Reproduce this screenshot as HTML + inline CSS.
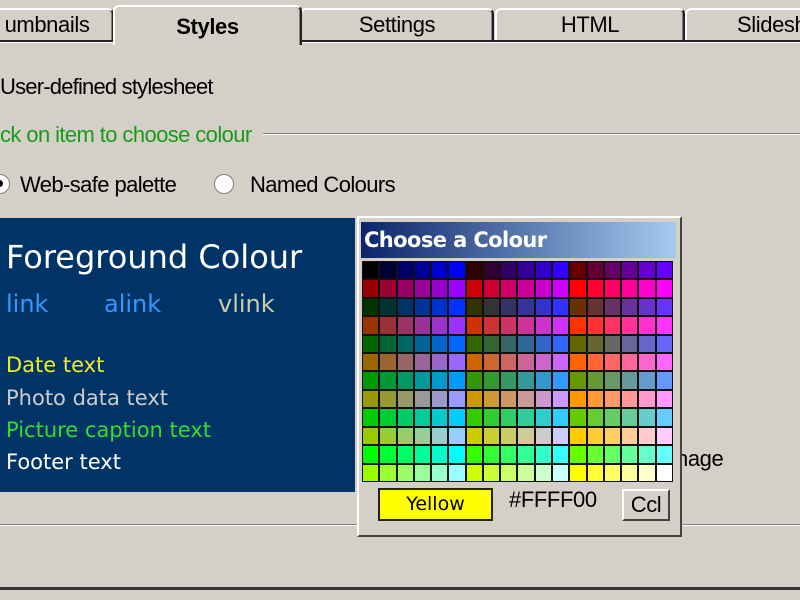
<!DOCTYPE html>
<html><head><style>
body{margin:0;width:800px;height:600px;background:#d4d0c8;position:relative;overflow:hidden;font-family:"Liberation Sans",sans-serif;}
.a{position:absolute;letter-spacing:-0.4px;}
.tab{position:absolute;top:8px;height:30px;border:2px solid #fff;border-right-color:#222;border-bottom:none;border-radius:6px 6px 0 0;background:#d4d0c8;font-size:22px;text-align:center;line-height:30px;box-shadow:inset -1px 0 0 #808080,0 2px 0 #222;letter-spacing:-0.4px;}
.t{position:absolute;font-family:"DejaVu Sans",sans-serif;}
#grid{position:absolute;left:362px;top:261px;width:311px;height:221px;background:#111;display:grid;grid-template-columns:repeat(18,1fr);grid-template-rows:repeat(12,1fr);gap:2px;padding:1px;box-sizing:border-box;}
</style></head><body>
<div class="tab" style="left:-20px;width:130px;">umbnails</div>
<div class="tab" style="left:300px;width:190px;">Settings</div>
<div class="tab" style="left:495px;width:186px;">HTML</div>
<div class="tab" style="left:685px;width:140px;text-align:left;padding-left:50px;">Slideshow</div>
<div class="a" style="left:0;top:40px;width:800px;height:2px;background:#222;"></div>
<div class="a" style="left:0;top:42px;width:800px;height:1px;background:#fff;"></div>
<div class="tab" style="left:113px;top:5px;width:185px;height:38px;font-weight:bold;line-height:40px;box-shadow:inset -1px 0 0 #808080;">Styles</div>
<div class="a" style="left:0;top:74px;font-size:22px;letter-spacing:-0.8px;">User-defined stylesheet</div>
<div class="a" style="left:0;top:122px;font-size:22px;color:#1a9a1a;letter-spacing:-0.6px;">ck on item to choose colour</div>
<div class="a" style="left:263px;top:133px;width:537px;height:1px;background:#808080;border-bottom:1px solid #fff;"></div>
<div class="a" style="left:-10px;top:174px;width:18px;height:18px;border-radius:50%;background:#fff;border:1px solid #808080;"></div>
<div class="a" style="left:-4px;top:180px;width:7px;height:7px;border-radius:50%;background:#000;"></div>
<div class="a" style="left:20px;top:172px;font-size:22px;letter-spacing:-0.6px;">Web-safe palette</div>
<div class="a" style="left:214px;top:174px;width:20px;height:20px;border-radius:50%;background:#fff;border:1px solid #808080;box-sizing:border-box;"></div>
<div class="a" style="left:250px;top:172px;font-size:22px;letter-spacing:-0.6px;">Named Colours</div>
<div class="a" style="left:0;top:218px;width:355px;height:274px;background:#003366;"></div>
<div class="t" style="left:6px;top:238px;font-size:32px;color:#fff;">Foreground Colour</div>
<div class="t" style="left:6px;top:290px;font-size:24px;color:#3399ff;">link</div>
<div class="t" style="left:104px;top:290px;font-size:24px;color:#3399ff;">alink</div>
<div class="t" style="left:218px;top:290px;font-size:24px;color:#ccccaa;">vlink</div>
<div class="t" style="left:6px;top:353px;font-size:21px;color:#eeee22;">Date text</div>
<div class="t" style="left:6px;top:386px;font-size:21px;color:#cccccc;">Photo data text</div>
<div class="t" style="left:6px;top:418px;font-size:21px;color:#33dd33;">Picture caption text</div>
<div class="t" style="left:6px;top:450px;font-size:21px;color:#fff;">Footer text</div>
<div class="a" style="left:676px;top:446px;font-size:22px;">nage</div>
<div class="a" style="left:0;top:524px;width:800px;height:1px;background:#808080;border-bottom:1px solid #fff;"></div>
<div class="a" style="left:0;top:587px;width:800px;height:3px;background:#333;"></div>
<div class="a" style="left:357px;top:216px;width:325px;height:321px;background:#d4d0c8;border:2px solid #fff;border-right-color:#444;border-bottom-color:#444;box-sizing:border-box;"></div>
<div class="a" style="left:361px;top:222px;width:315px;height:36px;background:linear-gradient(90deg,#0a246a,#a6caf0);color:#fff;font-weight:bold;font-size:21px;line-height:36px;padding-left:3px;box-sizing:border-box;font-family:'DejaVu Sans',sans-serif;letter-spacing:-0.6px;">Choose a Colour</div>
<div id="grid"></div>
<div class="a" style="left:378px;top:488px;width:115px;height:33px;background:#ffff00;border:2px solid #222;box-sizing:border-box;text-align:center;line-height:29px;font-size:19px;font-family:'DejaVu Sans',sans-serif;letter-spacing:0;">Yellow</div>
<div class="a" style="left:509px;top:487px;font-size:22px;">#FFFF00</div>
<div class="a" style="left:622px;top:489px;width:48px;height:32px;border:2px solid #fff;border-right-color:#444;border-bottom-color:#444;box-sizing:border-box;text-align:center;line-height:28px;font-size:22px;">Ccl</div>
<script>
var g=document.getElementById('grid'),h=['00','33','66','99','cc','ff'];
for(var r=0;r<12;r++)for(var c=0;c<18;c++){var gg=h[r>>1],rr=h[(r&1)*3+Math.floor(c/6)],bb=h[c%6];var d=document.createElement('div');d.style.background='#'+rr+gg+bb;g.appendChild(d);}
</script>
</body></html>
